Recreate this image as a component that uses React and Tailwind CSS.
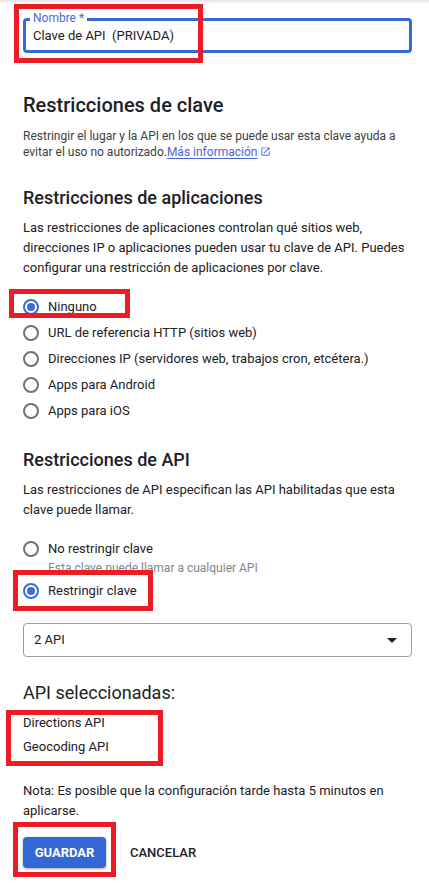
import { useState } from 'react';

const appRestrictions = [
  { id: 'none', label: 'Ninguno' },
  { id: 'http', label: 'URL de referencia HTTP (sitios web)' },
  { id: 'ip', label: 'Direcciones IP (servidores web, trabajos cron, etcétera.)' },
  { id: 'android', label: 'Apps para Android' },
  { id: 'ios', label: 'Apps para iOS' },
];

function Radio({ checked }) {
  return (
    <span
      className={`flex h-[16px] w-[16px] shrink-0 items-center justify-center rounded-full border-2 ${
        checked ? 'border-[#3b6bd6]' : 'border-[#6f7377]'
      }`}
    >
      {checked && <span className="h-[8px] w-[8px] rounded-full bg-[#3b6bd6]" />}
    </span>
  );
}

function RadioRow({ label, checked, onSelect, className = 'h-[26px]' }) {
  return (
    <button type="button" onClick={onSelect} className={`flex items-center gap-[9px] text-left ${className}`}>
      <Radio checked={checked} />
      <span className="text-[13px] leading-[20px]">{label}</span>
    </button>
  );
}

// red annotation frames drawn over the screenshot
function Mark({ className }) {
  return <div className={`pointer-events-none absolute border-[5px] border-[#ec1c24] ${className}`} />;
}

function OpenInNew() {
  return (
    <svg viewBox="0 0 24 24" className="ml-[3px] inline-block h-[11px] w-[11px] align-[-1px]" fill="#4a66d8">
      <path d="M19 19H5V5h7V3H5a2 2 0 0 0-2 2v14a2 2 0 0 0 2 2h14c1.1 0 2-.9 2-2v-7h-2v7zM14 3v2h3.59l-9.83 9.83 1.41 1.41L19 6.41V10h2V3h-7z" />
    </svg>
  );
}

export default function App() {
  const [appRestriction, setAppRestriction] = useState('none');
  const [apiRestriction, setApiRestriction] = useState('restrict');

  return (
    <div className="relative min-h-[885px] w-[429px] overflow-hidden bg-white font-[Roboto,_sans-serif] text-[#202124]">
      <div className="h-[4px] bg-gradient-to-b from-[#e4e4e4] to-white" />

      <div className="pl-[23px] pr-[17px]">
        {/* name field */}
        <div className="relative mt-[14px] flex h-[35px] items-center rounded-[4px] border-[3px] border-[#3569d6] pl-[7px]">
          <span className="absolute left-[4px] top-[-10px] bg-white px-[3px] text-[12px] leading-[14px] text-[#4a66d8]">
            Nombre *
          </span>
          <span className="whitespace-pre text-[13px]">Clave de API  (PRIVADA)</span>
        </div>

        <h2 className="mt-[38px] text-[20px] font-medium leading-[28px]">Restricciones de clave</h2>
        <p className="mt-[9px] pr-[4px] text-[12px] leading-[16px] text-[#3c4043]">
          Restringir el lugar y la API en los que se puede usar esta clave ayuda a evitar el uso no autorizado.
          <a className="text-[#4a66d8] underline underline-offset-[2px]">Más información</a>
          <OpenInNew />
        </p>

        <h2 className="mt-[24px] text-[18px] font-medium leading-[28px]">Restricciones de aplicaciones</h2>
        <p className="mt-[6px] text-[13px] leading-[20px]">
          Las restricciones de aplicaciones controlan qué sitios web, direcciones IP o aplicaciones pueden usar tu clave
          de API. Puedes configurar una restricción de aplicaciones por clave.
        </p>

        <div className="mt-[16px] flex flex-col">
          {appRestrictions.map((r) => (
            <RadioRow
              key={r.id}
              label={r.label}
              checked={appRestriction === r.id}
              onSelect={() => setAppRestriction(r.id)}
            />
          ))}
        </div>

        <h2 className="mt-[22px] text-[18px] font-medium leading-[28px]">Restricciones de API</h2>
        <p className="mt-[6px] text-[13px] leading-[20px]">
          Las restricciones de API especifican las API habilitadas que esta clave puede llamar.
        </p>

        <div className="mt-[17px] flex flex-col">
          <RadioRow
            label="No restringir clave"
            className="h-[24px]"
            checked={apiRestriction === 'none'}
            onSelect={() => setApiRestriction('none')}
          />
          <span className="pl-[25px] text-[12px] leading-[14px] text-[#80868b]">
            Esta clave puede llamar a cualquier API
          </span>
          <RadioRow
            label="Restringir clave"
            className="mt-[3px] h-[26px]"
            checked={apiRestriction === 'restrict'}
            onSelect={() => setApiRestriction('restrict')}
          />
        </div>

        <div className="mt-[19px] flex h-[34px] items-center justify-between rounded-[4px] border border-[#9aa0a6] pl-[10px] pr-[14px]">
          <span className="text-[13px]">2 API</span>
          <svg viewBox="0 0 10 5" className="h-[5px] w-[10px]" fill="#202124">
            <path d="M0 0h10L5 5z" />
          </svg>
        </div>

        <h3 className="mt-[24px] text-[18px] leading-[24px]">API seleccionadas:</h3>
        <ul className="mt-[6px] text-[13px] leading-[24px]">
          <li>Directions API</li>
          <li>Geocoding API</li>
        </ul>

        <p className="mt-[22px] text-[13px] leading-[20px]">
          Nota: Es posible que la configuración tarde hasta 5 minutos en aplicarse.
        </p>

        <div className="mt-[16px] flex items-center gap-[24px]">
          <button
            type="button"
            className="h-[31px] w-[83px] rounded-[4px] bg-[#3367d6] text-[13px] font-bold text-white shadow-[0_1px_3px_rgba(0,0,0,0.35)]"
          >
            GUARDAR
          </button>
          <button type="button" className="text-[13px] font-medium text-[#202124]">
            CANCELAR
          </button>
        </div>
      </div>

      <Mark className="left-[14px] top-[4px] h-[59px] w-[189px]" />
      <Mark className="left-[9px] top-[289px] h-[29px] w-[121px]" />
      <Mark className="left-[13px] top-[570px] h-[41px] w-[140px]" />
      <Mark className="left-[6px] top-[710px] h-[56px] w-[157px]" />
      <Mark className="left-[13px] top-[822px] h-[55px] w-[103px]" />
    </div>
  );
}
